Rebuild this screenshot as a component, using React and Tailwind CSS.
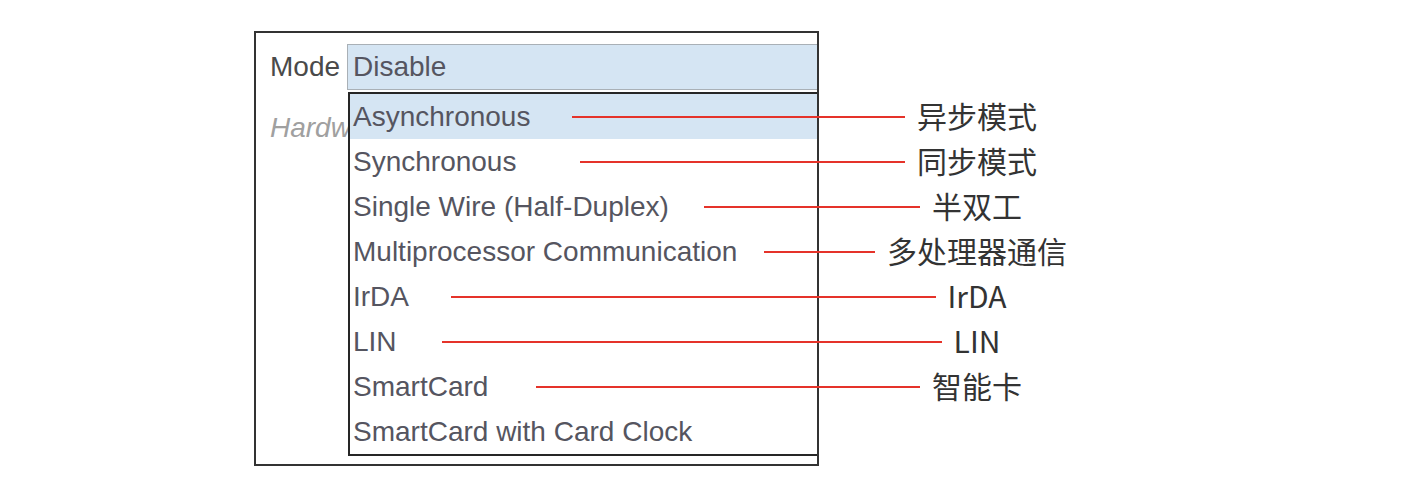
import React from "react";

const items = [
  { t: "Asynchronous", hl: true, zh: "异步模式", w: "w-[333px]" },
  { t: "Synchronous", zh: "同步模式", w: "w-[325px]" },
  { t: "Single Wire (Half-Duplex)", zh: "半双工", w: "w-[216px]" },
  { t: "Multiprocessor Communication", zh: "多处理器通信", w: "w-[111px]" },
  { t: "IrDA", zh: "IrDA", w: "w-[485px]" },
  { t: "LIN", zh: "LIN", w: "w-[500px]" },
  { t: "SmartCard", zh: "智能卡", w: "w-[384px]" },
  { t: "SmartCard with Card Clock" },
];

export default function App() {
  return (
    <div className="relative w-[1416px] h-[497px] bg-white overflow-hidden">
      <div className="pt-[31px] pl-[254px]">
        <div
          className="relative w-[565px] h-[435px] border-2 border-[#333333] bg-white overflow-hidden pl-[14px] pt-[11px]"
          style={{ fontFamily: '"Liberation Sans", Arial, sans-serif' }}
        >
          <div className="flex items-center h-[46px]">
            <div className="w-[77px] shrink-0 text-[28px] leading-none text-[#4a4a4a]">Mode</div>
            <div className="flex items-center h-[46px] w-[520px] shrink-0 border border-[#a9b0b6] bg-[#d5e5f3] pl-[5px] text-[28px] leading-none text-[#555560]">
              Disable
            </div>
          </div>
          <div className="mt-[15px] h-[46px] w-[78px] overflow-hidden flex items-center text-[28px] italic leading-none text-[#a0a0a0] whitespace-nowrap">
            Hardware Flow Control (RS232)
          </div>

          <div className="absolute left-[92px] top-[59px] w-[520px] border-2 border-[#262626] bg-white">
            {items.map((it) => (
              <div
                key={it.t}
                className={
                  "h-[45px] flex items-center pl-[3px] text-[28px] leading-none text-[#555560] whitespace-nowrap " +
                  (it.hl ? "bg-[#d5e5f3]" : "bg-white")
                }
              >
                {it.t}
              </div>
            ))}
          </div>
        </div>
      </div>

      <div className="absolute left-0 top-[94px] w-full">
        {items.map((it) => (
          <div key={it.t} className="h-[45px] flex items-center">
            <div className="w-[877px] shrink-0" />
            {it.zh && (
              <div className="w-[200px] flex justify-center">
                <span
                  className="relative text-[30px] leading-none text-[#333333] -mt-[3px]"
                  style={{ fontFamily: '"Noto Sans CJK SC", "Noto Sans", sans-serif' }}
                >
                  <span
                    className={
                      "absolute right-full mr-[12px] top-1/2 mt-[1px] h-[2px] bg-[#e5332a] " + it.w
                    }
                  />
                  {it.zh}
                </span>
              </div>
            )}
          </div>
        ))}
      </div>
    </div>
  );
}
